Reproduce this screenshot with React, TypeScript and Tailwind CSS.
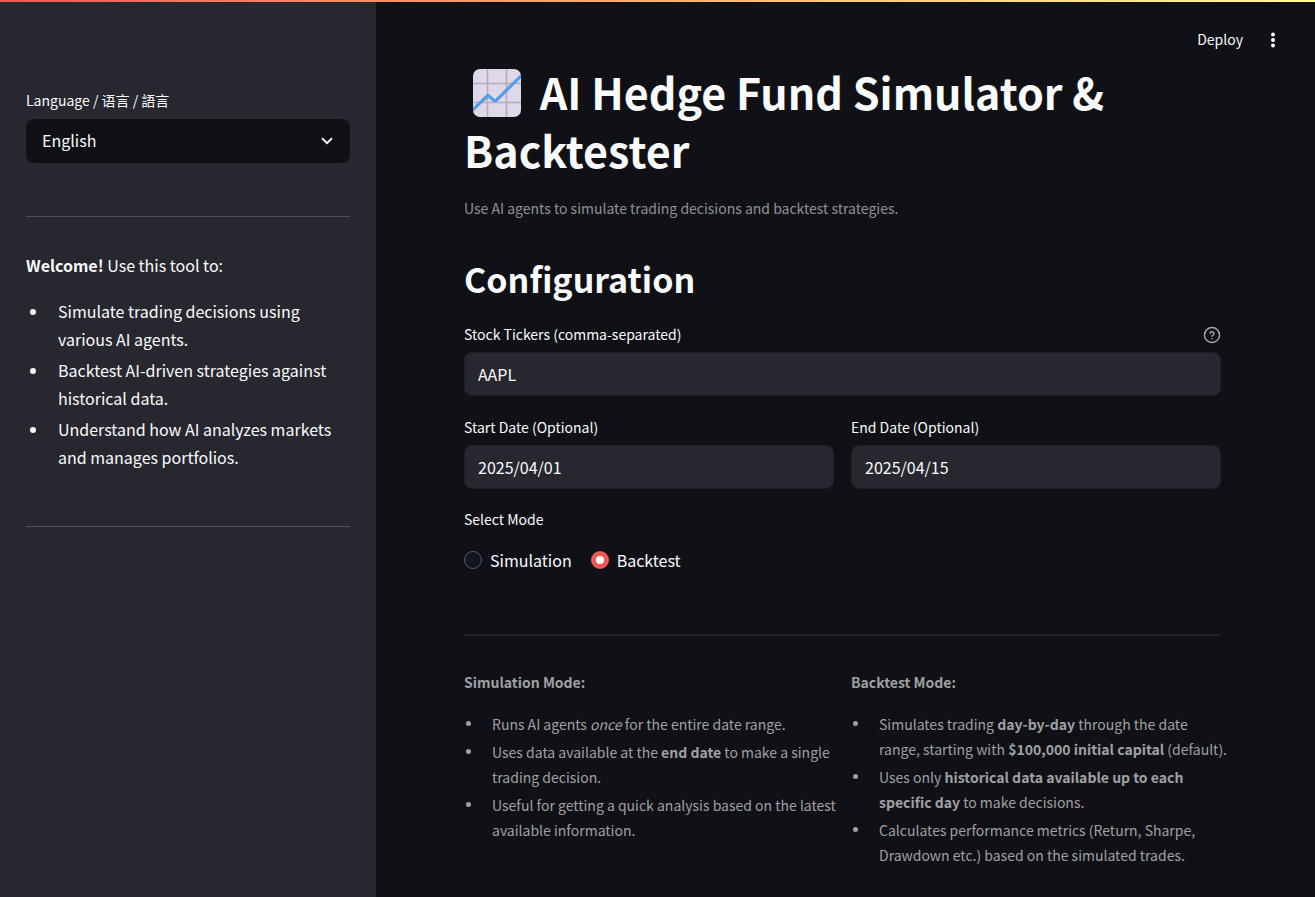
import { useState } from "react";
import type { ReactNode } from "react";

function Divider({ className }: { className: string }) {
  return <hr className={`w-full border-0 ${className}`} />;
}

function ChartIcon() {
  return (
    <svg viewBox="0 0 48 48" className="mx-[9px] inline-block size-12 align-[-7px]" role="img" aria-label="Chart increasing">
      <defs>
        <clipPath id="tile">
          <rect width="48" height="48" rx="7" />
        </clipPath>
      </defs>
      <g clipPath="url(#tile)">
        <rect width="48" height="48" fill="#ded8e8" />
        <path d="M14.5 0V48M33.5 0V48M0 14.5H48M0 33.5H48" stroke="#b4acbc" strokeWidth="1.6" fill="none" />
        <path d="M-2 42.5L14.8 26.5Q15 26.3 15.6 26.8L20.4 31Q22 32.4 23.6 31L50 5" stroke="#539fe3" strokeWidth="3.2" fill="none" strokeLinejoin="round" />
      </g>
    </svg>
  );
}

function HelpIcon() {
  return (
    <svg viewBox="0 0 24 24" className="size-[18px]" fill="none" stroke="#a6a7aa" strokeWidth="2" strokeLinecap="round" strokeLinejoin="round" aria-hidden="true">
      <circle cx="12" cy="12" r="10" />
      <path d="M9.4 9.4a2.7 2.7 0 0 1 5.2 .8c0 1.8-2.6 2.4-2.6 3.6M12 17h.01" />
    </svg>
  );
}

function TextField({ id, label, initial, help }: { id: string; label: string; initial: string; help?: string }) {
  const [value, setValue] = useState(initial);
  return (
    <div className="flex min-w-0 flex-1 flex-col gap-[5px]">
      <div className="flex h-[26px] items-center justify-between">
        <label htmlFor={id} className="text-sm">{label}</label>
        {help && (
          <button type="button" aria-label={help} className="pt-0.5">
            <HelpIcon />
          </button>
        )}
      </div>
      <input
        id={id}
        type="text"
        value={value}
        onChange={(e) => setValue(e.target.value)}
        className="h-11 w-full rounded-lg border border-[#1f2027] bg-[#272730] px-[13px] text-base text-[#fafafa] outline-none focus:border-[#f05a54]"
      />
    </div>
  );
}

function ModeNotes({ title, items }: { title: string; items: ReactNode[] }) {
  return (
    <section className="min-w-0 flex-1 text-sm leading-[25px] text-[#a0a0a2]">
      <p className="font-bold">{title}</p>
      <ul className="mt-[17px] -mr-2 flex flex-col gap-[3px]">
        {items.map((item, i) => (
          <li key={i} className="flex">
            <span className="mt-[9px] mr-[21px] ml-0.5 size-[5px] shrink-0 rounded-full bg-[#a0a0a2]" />
            <span>{item}</span>
          </li>
        ))}
      </ul>
    </section>
  );
}

const languages = ["English", "简体中文", "繁體中文"];
const modes = ["Simulation", "Backtest"];
const welcome = [
  "Simulate trading decisions using various AI agents.",
  "Backtest AI-driven strategies against historical data.",
  "Understand how AI analyzes markets and manages portfolios.",
];

export default function App() {
  const [language, setLanguage] = useState("English");
  const [mode, setMode] = useState("Backtest");

  return (
    <div className="flex min-h-screen flex-col bg-[#0f1116] font-['Noto_Sans_CJK_SC','Noto_Sans_CJK_TC',sans-serif] text-base text-[#fafafa]">
      <div className="h-0.5 bg-linear-to-r from-[#f05a54] to-[#fffd96]" />
      <div className="flex flex-1">
        <aside className="w-[376px] shrink-0 bg-[#272730] px-[26px] pt-[85px]">
          <label htmlFor="language" className="flex h-[26px] items-center text-sm">Language / 语言 / 語言</label>
          <div className="relative mt-1.5">
            <select
              id="language"
              value={language}
              onChange={(e) => setLanguage(e.target.value)}
              className="h-11 w-full appearance-none rounded-lg bg-[#0f1116] px-4 pb-0.5 text-base outline-none"
            >
              {languages.map((l) => (
                <option key={l}>{l}</option>
              ))}
            </select>
            <svg viewBox="0 0 12 8" className="pointer-events-none absolute top-[18px] right-[17px] h-2 w-3" fill="none" stroke="#fafafa" strokeWidth="2" aria-hidden="true">
              <path d="M1 1.2L6 6.2L11 1.2" />
            </svg>
          </div>
          <Divider className="mt-[53px] h-px bg-[#4d4e58]" />
          <p className="mt-[34px] leading-7"><strong>Welcome!</strong> Use this tool to:</p>
          <ul className="mt-[18px] flex flex-col gap-[3px] leading-7">
            {welcome.map((text) => (
              <li key={text} className="flex">
                <span className="mt-3 mr-[22px] ml-1 size-1.5 shrink-0 rounded-full bg-[#fafafa]" />
                <span>{text}</span>
              </li>
            ))}
          </ul>
          <Divider className="mt-[55px] h-px bg-[#4d4e58]" />
        </aside>

        <div className="min-w-0 flex-1">
          <header className="flex h-[60px] items-end justify-end gap-6 pr-9 pb-2">
            <button type="button" className="flex h-7 items-start text-sm leading-[26px]">Deploy</button>
            <button type="button" aria-label="Main menu" className="flex h-7 w-3 items-center justify-center">
              <svg viewBox="0 0 6 16" className="h-4 w-1.5" fill="#fafafa" aria-hidden="true">
                <circle cx="3" cy="2.4" r="2" />
                <circle cx="3" cy="8" r="2" />
                <circle cx="3" cy="13.6" r="2" />
              </svg>
            </button>
          </header>
          <main className="pr-[94px] pb-7 pl-[88px]">
            <h1 className="text-[43px] leading-[58px] font-bold"><ChartIcon /> AI Hedge Fund Simulator &amp; Backtester</h1>
            <p className="mt-[18px] text-sm leading-[25px] text-[#919294]">Use AI agents to simulate trading decisions and backtest strategies.</p>
            <h2 className="mt-[34px] text-[34px] leading-[48px] font-bold">Configuration</h2>

            <form className="mt-[18px]" onSubmit={(e) => e.preventDefault()}>
              <TextField id="tickers" label="Stock Tickers (comma-separated)" initial="AAPL" help="Enter ticker symbols separated by commas" />
              <div className="mt-[18px] flex gap-[17px]">
                <TextField id="start" label="Start Date (Optional)" initial="2025/04/01" />
                <TextField id="end" label="End Date (Optional)" initial="2025/04/15" />
              </div>
              <fieldset className="mt-[17px]">
                <legend className="text-sm leading-[26px]">Select Mode</legend>
                <div className="mt-3.5 flex gap-[19px]">
                  {modes.map((m) => (
                    <label key={m} className="flex h-7 items-center gap-2">
                      <input
                        type="radio"
                        name="mode"
                        checked={mode === m}
                        onChange={() => setMode(m)}
                        className="size-[18px] appearance-none rounded-full border border-[#5b5c60] bg-[#13161f] checked:border-[5px] checked:border-[#f05a54] checked:bg-[#fafafa]"
                      />
                      {m}
                    </label>
                  ))}
                </div>
              </fieldset>
            </form>

            <Divider className="mt-[60px] h-0.5 bg-[#202124]" />
            <div className="mt-[34px] flex gap-[17px]">
              <ModeNotes
                title="Simulation Mode:"
                items={[
                  <>Runs AI agents <em>once</em> for the entire date range.</>,
                  <>Uses data available at the <strong>end date</strong> to make a single trading decision.</>,
                  <>Useful for getting a quick analysis based on the latest available information.</>,
                ]}
              />
              <ModeNotes
                title="Backtest Mode:"
                items={[
                  <>Simulates trading <strong>day-by-day</strong> through the date range, starting with <strong>$100,000 initial capital</strong> (default).</>,
                  <>Uses only <strong>historical data available up to each specific day</strong> to make decisions.</>,
                  <>Calculates performance metrics (Return, Sharpe, Drawdown etc.) based on the simulated trades.</>,
                ]}
              />
            </div>
          </main>
        </div>
      </div>
    </div>
  );
}
